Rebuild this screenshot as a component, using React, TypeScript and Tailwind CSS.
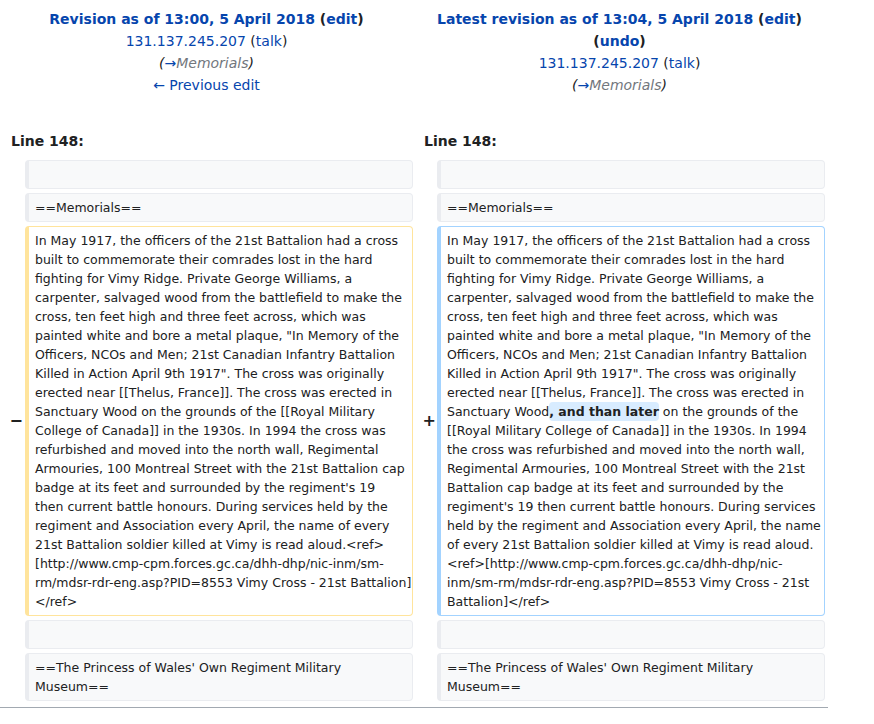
import { Fragment, ReactNode } from "react";

const link = "text-[#0645ad]";

const oldLines: ReactNode[] = [
  "In May 1917, the officers of the 21st Battalion had a cross",
  "built to commemorate their comrades lost in the hard",
  "fighting for Vimy Ridge. Private George Williams, a",
  "carpenter, salvaged wood from the battlefield to make the",
  "cross, ten feet high and three feet across, which was",
  'painted white and bore a metal plaque, "In Memory of the',
  "Officers, NCOs and Men; 21st Canadian Infantry Battalion",
  'Killed in Action April 9th 1917". The cross was originally',
  "erected near [[Thelus, France]]. The cross was erected in",
  "Sanctuary Wood on the grounds of the [[Royal Military",
  "College of Canada]] in the 1930s. In 1994 the cross was",
  "refurbished and moved into the north wall, Regimental",
  "Armouries, 100 Montreal Street with the 21st Battalion cap",
  "badge at its feet and surrounded by the regiment's 19",
  "then current battle honours. During services held by the",
  "regiment and Association every April, the name of every",
  "21st Battalion soldier killed at Vimy is read aloud.<ref>",
  "[http://www.cmp-cpm.forces.gc.ca/dhh-dhp/nic-inm/sm-",
  "rm/mdsr-rdr-eng.asp?PID=8553 Vimy Cross - 21st Battalion]",
  "</ref>",
];

const newLines: ReactNode[] = [
  "In May 1917, the officers of the 21st Battalion had a cross",
  "built to commemorate their comrades lost in the hard",
  "fighting for Vimy Ridge. Private George Williams, a",
  "carpenter, salvaged wood from the battlefield to make the",
  "cross, ten feet high and three feet across, which was",
  'painted white and bore a metal plaque, "In Memory of the',
  "Officers, NCOs and Men; 21st Canadian Infantry Battalion",
  'Killed in Action April 9th 1917". The cross was originally',
  "erected near [[Thelus, France]]. The cross was erected in",
  <>
    Sanctuary Wood
    <span className="bg-[#d8ecff] font-bold rounded-[4px] py-[2px]">, and than later</span> on the
    grounds of the
  </>,
  "[[Royal Military College of Canada]] in the 1930s. In 1994",
  "the cross was refurbished and moved into the north wall,",
  "Regimental Armouries, 100 Montreal Street with the 21st",
  "Battalion cap badge at its feet and surrounded by the",
  "regiment's 19 then current battle honours. During services",
  "held by the regiment and Association every April, the name",
  "of every 21st Battalion soldier killed at Vimy is read aloud.",
  "<ref>[http://www.cmp-cpm.forces.gc.ca/dhh-dhp/nic-",
  "inm/sm-rm/mdsr-rdr-eng.asp?PID=8553 Vimy Cross - 21st",
  "Battalion]</ref>",
];

function Lines({ lines }: { lines: ReactNode[] }) {
  return (
    <>
      {lines.map((l, i) => (
        <Fragment key={i}>
          {l}
          {i < lines.length - 1 && <br />}
        </Fragment>
      ))}
    </>
  );
}

function Box({ kind = "context", children }: { kind?: "context" | "deleted" | "added"; children?: ReactNode }) {
  const styles =
    kind === "deleted"
      ? "bg-white border-[#ffe49c]"
      : kind === "added"
        ? "bg-white border-[#a3d3ff]"
        : "bg-[#f8f9fa] border-[#eaecf0]";
  return (
    <div
      className={`h-fit min-h-[29px] border border-l-4 rounded-[4px] px-[6px] py-[4px] text-[12.5px] leading-[19px] whitespace-nowrap ${styles}`}
    >
      {children}
    </div>
  );
}

function Comment() {
  return (
    <span className="italic">
      (<span className={link}>→</span>
      <span className="text-[#72777d]">Memorials</span>)
    </span>
  );
}

export default function App() {
  return (
    <div className="font-['DejaVu_Sans',sans-serif] text-[#202122] bg-white min-h-[724px]">
      <div className="w-[828px] pt-[8px] pb-[6px] border-b border-[#a2a9b1]">
        <div className="grid grid-cols-[413px_413px] text-[14px] leading-[22px] text-center">
          <div>
            <div className="font-bold">
              <span className={link}>Revision as of 13:00, 5 April 2018</span> (<span className={link}>edit</span>)
            </div>
            <div>
              <span className={link}>131.137.245.207</span> (<span className={link}>talk</span>)
            </div>
            <div>
              <Comment />
            </div>
            <div className={link}>← Previous edit</div>
          </div>
          <div>
            <div className="font-bold">
              <span className={link}>Latest revision as of 13:04, 5 April 2018</span> (
              <span className={link}>edit</span>)
            </div>
            <div className="font-bold">
              (<span className={link}>undo</span>)
            </div>
            <div>
              <span className={link}>131.137.245.207</span> (<span className={link}>talk</span>)
            </div>
            <div>
              <Comment />
            </div>
          </div>
        </div>

        <div className="grid grid-cols-[25px_388px_24px_388px] gap-y-[4px] mt-[34px]">
          <div className="col-span-2 pl-[11px] pb-[4px] text-[14px] leading-[22px] font-bold">Line 148:</div>
          <div className="col-span-2 pl-[11px] pb-[4px] text-[14px] leading-[22px] font-bold">Line 148:</div>

          <div />
          <Box />
          <div />
          <Box />

          <div />
          <Box>==Memorials==</Box>
          <div />
          <Box>==Memorials==</Box>

          <div className="flex items-center justify-end pr-[2px] text-[16px] font-bold">−</div>
          <Box kind="deleted">
            <Lines lines={oldLines} />
          </Box>
          <div className="flex items-center justify-end pr-[1px] text-[16px] font-bold">+</div>
          <Box kind="added">
            <Lines lines={newLines} />
          </Box>

          <div />
          <Box />
          <div />
          <Box />

          <div />
          <Box>
            ==The Princess of Wales' Own Regiment Military
            <br />
            Museum==
          </Box>
          <div />
          <Box>
            ==The Princess of Wales' Own Regiment Military
            <br />
            Museum==
          </Box>
        </div>
      </div>
    </div>
  );
}
